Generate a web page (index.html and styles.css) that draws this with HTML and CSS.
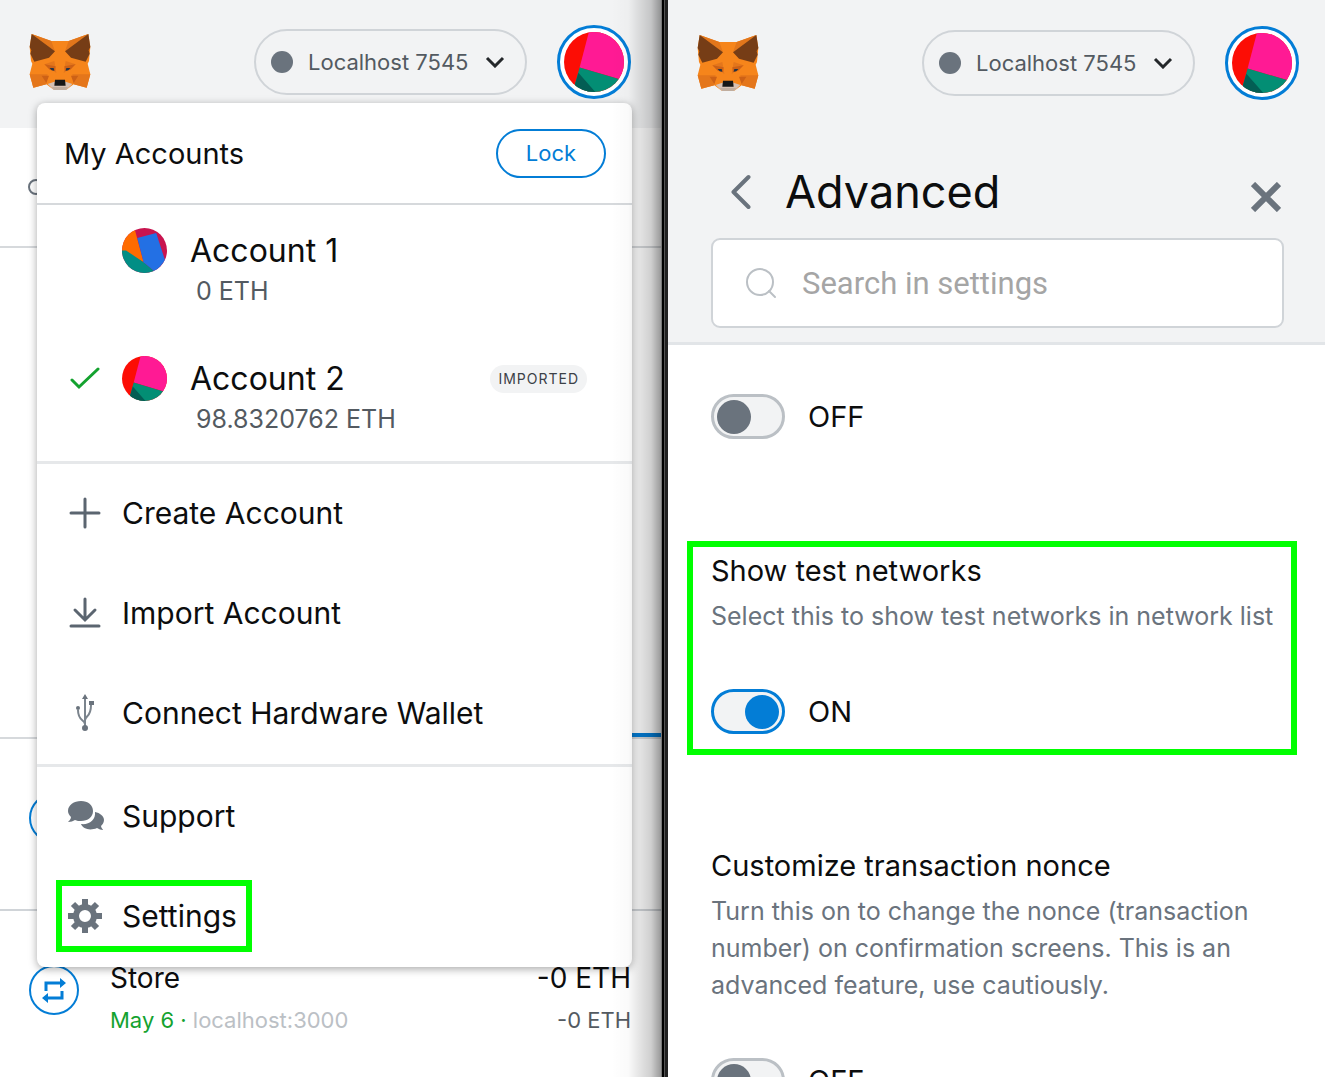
FILE: index.html
```html
<!DOCTYPE html>
<html lang="en">
<head>
<meta charset="utf-8">
<title>Wallet</title>
<link rel="stylesheet" href="styles.css">
</head>
<body>
<svg class="defs" aria-hidden="true">
  <symbol id="fox" viewBox="0 0 186 174">
    <path fill="#f6851b" d="M8 3 67 24H119L178 3 184 42 180 84 176 92 184 124 173 164 134 154 112 170H74L52 154 13 164 2 124 10 92 6 84 2 42Z"/>
    <path fill="#e2761b" d="M8 3 67 24 78 55ZM178 3 119 24 108 55Z"/>
    <path fill="#763d16" d="M8 3 78 55 60 74 16 86 4 62 7 52 2 42ZM178 3 108 55 126 74 170 86 182 62 179 52 184 42Z"/>
    <path fill="#e4761b" d="M2 124H56L52 154 13 164ZM184 124H130L134 154 173 164Z"/>
    <path fill="#e4761b" d="M76 84 82 120 46 94ZM110 84 104 120 140 94Z"/>
    <path fill="#cd6116" d="M46 94 80 100 78 114 62 110ZM140 94 106 100 108 114 124 110ZM38 128H60L52 150ZM148 128H126L134 150Z"/>
    <path fill="#233447" d="M62 105 74 105 76 113 68 112ZM124 105 112 105 110 113 118 112Z"/>
    <path fill="#d7c1b3" d="M56 153 76 146H110L130 153 112 170H74Z"/>
    <path fill="#c0ad9e" d="M68 162H118L110 171H76Z"/>
    <path fill="#161616" d="M78 140H108L110 158H76Z"/>
  </symbol>
  <symbol id="avatar-pink" viewBox="0 0 100 100">
    <clipPath id="disc"><circle cx="50" cy="50" r="50"/></clipPath>
    <g clip-path="url(#disc)">
      <path fill="#fc0d05" d="M0 0H100V100H0Z"/>
      <path fill="#ff1a94" d="M42-2 26 59 100 81V-2Z"/>
      <path fill="#038e74" d="M26 59 100 81V102H14Z"/>
      <path fill="#035e54" d="M24 68 54 102H14Z"/>
    </g>
  </symbol>
  <symbol id="avatar-blue" viewBox="0 0 100 100">
    <clipPath id="disc-blue"><circle cx="50" cy="50" r="50"/></clipPath>
    <g clip-path="url(#disc-blue)">
      <path fill="#c8144f" d="M0 0H100V100H0Z"/>
      <path fill="#ff6b00" d="M27-2 48 76 0 50V-2Z"/>
      <path fill="#018e85" d="M0 50H9L48 76 74 98V102H0Z"/>
      <path fill="#2370e4" d="M34 22 76 11 96 73 74 98 48 76Z"/>
    </g>
  </symbol>
  <symbol id="chevron" viewBox="0 0 20 12">
    <path d="M2 2 10 10 18 2" fill="none" stroke="#24272a" stroke-width="3"/>
  </symbol>
  <symbol id="swap" viewBox="0 0 50 50">
    <circle cx="25" cy="25" r="24" fill="#fff" stroke="#037dd6" stroke-width="2"/>
    <path d="M17 26V18H33M33 26V33H17" fill="none" stroke="#037dd6" stroke-width="3"/>
    <path d="M31 13 37 18 31 23ZM19 28 13 33 19 38Z" fill="#037dd6"/>
  </symbol>
</svg>

<main class="screens">
  <section class="panel home">
    <header class="bar">
      <svg class="fox"><use href="#fox"/></svg>
      <button class="network"><span class="dot"></span>Localhost 7545<svg class="chev"><use href="#chevron"/></svg></button>
      <button class="avatar-btn" aria-label="Accounts"><svg><use href="#avatar-pink"/></svg></button>
    </header>
    <div class="status"><span class="ring"></span></div>
    <div class="overview"></div>
    <ul class="activity">
      <li class="tx"><svg class="tx-icon"><use href="#swap"/></svg></li>
      <li class="tx">
        <svg class="tx-icon"><use href="#swap"/></svg>
        <div class="tx-text">
          <div class="tx-line"><span>Store</span><span>-0 ETH</span></div>
          <div class="tx-line tx-sub"><span><span class="date">May 6 ·</span> localhost:3000</span><span class="fiat">-0 ETH</span></div>
        </div>
      </li>
    </ul>

    <nav class="menu">
      <div class="menu-head"><h2>My Accounts</h2><button class="lock">Lock</button></div>
      <div class="group accounts">
        <button class="account">
          <span class="check"></span>
          <svg class="acc-avatar"><use href="#avatar-blue"/></svg>
          <span class="acc-text"><span class="acc-name">Account 1</span><span class="acc-bal">0 ETH</span></span>
        </button>
        <button class="account">
          <span class="check"><svg viewBox="0 0 30 24"><path d="M2 13 9 20 28 2" fill="none" stroke="#14a22f" stroke-width="3" stroke-linecap="round"/></svg></span>
          <svg class="acc-avatar"><use href="#avatar-pink"/></svg>
          <span class="acc-text"><span class="acc-name">Account 2</span><span class="acc-bal">98.8320762 ETH</span></span>
          <span class="tag">IMPORTED</span>
        </button>
      </div>
      <div class="group">
        <button class="item"><svg viewBox="0 0 36 40"><path d="M17 6V34M3 20H31" stroke="#5b6570" stroke-width="3" stroke-linecap="round"/></svg>Create Account</button>
        <button class="item"><svg viewBox="0 0 36 40"><path d="M17 6V26M7 17 17 27 27 17M3 33H31" fill="none" stroke="#5b6570" stroke-width="3" stroke-linecap="round"/></svg>Import Account</button>
        <button class="item"><svg viewBox="0 0 36 40"><g fill="none" stroke="#7b848d" stroke-width="2"><path d="M17 5V36M17 31C16 26 10 28 10 17M17 27C18 22 23 24 23 12"/></g><path fill="#6a737d" d="M17 1 20 6H14ZM21 8H26V12H21ZM17 32A3 3 0 1 1 17 38 3 3 0 1 1 17 32Z"/><circle cx="10" cy="15" r="2" fill="#6a737d"/></svg>Connect Hardware Wallet</button>
      </div>
      <div class="group">
        <button class="item"><svg viewBox="0 0 36 40"><path fill="#6a737d" d="M27 16C32 17 36 20 36 24 36 27 34 29 33 30 33 32 35 33 35 34 33 34 31 33 29 32 22 35 15 33 13 28 21 29 28 24 27 16Z"/><path fill="#6a737d" d="M13 5C20 5 25 9 25 15S20 25 13 25C11 25 9 25 7 24 5 25 3 26 0 26 1 25 3 23 3 21 1 19 0 17 0 15 0 9 6 5 13 5Z"/></svg>Support</button>
        <button class="item marked"><svg viewBox="0 0 36 40"><circle cx="17" cy="20" r="9" fill="none" stroke="#6a737d" stroke-width="6"/><g stroke="#6a737d" stroke-width="6"><path d="M17 3V9M17 31V37M0 20H6M28 20H34M5 8 9 12M25 28 29 32M29 8 25 12M9 28 5 32"/></g></svg>Settings</button>
      </div>
    </nav>
  </section>

  <section class="panel settings">
    <div class="settings-top">
      <header class="bar">
        <svg class="fox"><use href="#fox"/></svg>
        <button class="network"><span class="dot"></span>Localhost 7545<svg class="chev"><use href="#chevron"/></svg></button>
        <button class="avatar-btn" aria-label="Accounts"><svg><use href="#avatar-pink"/></svg></button>
      </header>
      <div class="title">
        <button class="back" aria-label="Back"><svg viewBox="0 0 20 36"><path d="M18 3 3 18 18 33" fill="none" stroke="#6a737d" stroke-width="4" stroke-linecap="round" stroke-linejoin="round"/></svg></button>
        <h1>Advanced</h1>
        <button class="close" aria-label="Close"><svg viewBox="0 0 30 30"><path d="M2 2 28 28M28 2 2 28" stroke="#6a737d" stroke-width="6"/></svg></button>
      </div>
      <label class="search">
        <svg viewBox="0 0 32 32"><circle cx="15" cy="15" r="13" fill="none" stroke="#bbc0c5" stroke-width="2"/><path d="M24 24 30 30" stroke="#bbc0c5" stroke-width="2" stroke-linecap="round"/></svg>
        <input type="text" placeholder="Search in settings" aria-label="Search in settings">
      </label>
    </div>
    <div class="options">
      <section class="option">
        <label class="toggle"><input type="checkbox">OFF</label>
      </section>
      <section class="option marked-option">
        <h3>Show test networks</h3>
        <p>Select this to show test networks in network list</p>
        <label class="toggle"><input type="checkbox" checked>ON</label>
      </section>
      <section class="option">
        <h3>Customize transaction nonce</h3>
        <p>Turn this on to change the nonce (transaction number) on confirmation screens. This is an advanced feature, use cautiously.</p>
        <label class="toggle"><input type="checkbox">OFF</label>
      </section>
    </div>
  </section>
</main>
</body>
</html>
```

FILE: styles.css
```css
*, *::before, *::after { box-sizing: border-box; }
body { margin: 0; background: #fff; color: #0c0d0e; font-family: Inter, "Liberation Sans", sans-serif; font-size: 28px; }
h1, h2, h3, p, ul { margin: 0; padding: 0; font-weight: 400; }
button { margin: 0; padding: 0; border: 0; background: none; font: inherit; color: inherit; text-align: left; }
svg { display: block; flex: none; }
.defs { position: absolute; width: 0; height: 0; }

.screens { display: grid; grid-template-columns: 668fr 657fr; height: 100vh; overflow: hidden; }
.panel { position: relative; min-width: 0; overflow: hidden; }

.bar { display: flex; align-items: center; gap: 30px; height: 128px; padding: 0 26px 4px 29px; background: #f2f3f4; }
.fox { width: 62px; height: 58px; margin-right: auto; }
.network { display: flex; align-items: center; width: 273px; height: 66px; padding: 0 20px 0 15px; border: 2px solid #d0d4d8; border-radius: 33px; color: #535a61; font-size: 22px; white-space: nowrap; }
.dot { width: 22px; height: 22px; margin-right: 15px; border-radius: 50%; background: #6a737d; }
.chev { width: 20px; height: 12px; margin-left: auto; }
.avatar-btn { display: grid; place-items: center; width: 74px; height: 74px; border: 3px solid #037dd6; border-radius: 50%; background: #fff; }
.avatar-btn svg { width: 60px; height: 60px; }

.home { padding-right: 7px; background: linear-gradient(90deg, #777 1px, #000 1px 3px, #555 3px 4px, #222 4px) right / 7px 100% no-repeat; }
.home::after { content: ""; position: absolute; top: 0; right: 7px; bottom: 0; width: 50px; background: linear-gradient(90deg, transparent, rgba(0, 0, 0, .02) 35%, rgba(0, 0, 0, .08) 50%, rgba(0, 0, 0, .19) 80%, rgba(0, 0, 0, .4)); pointer-events: none; }
.home .bar { padding-right: 30px; }
.status { display: flex; align-items: center; height: 120px; padding-left: 28px; border-bottom: 2px solid #d6d9dc; }
.ring { width: 16px; height: 16px; border: 2px solid #6a737d; border-radius: 50%; }
.overview { height: 491px; border-bottom: 2px solid #d6d9dc; background: linear-gradient(#037dd6, #037dd6) right bottom / 50% 4px no-repeat; }
.activity { list-style: none; }
.tx { display: flex; gap: 31px; height: 172px; padding: 54px 30px 0 29px; border-bottom: 2px solid #d0d4d8; }
.tx-icon { width: 50px; height: 50px; }
.tx-text { flex: 1; }
.tx-line { display: flex; justify-content: space-between; line-height: 26px; }
.tx-sub { margin-top: 16px; color: #bbc0c5; font-size: 22px; }
.date { color: #14a22f; }
.fiat { color: #535a61; }

.menu { position: absolute; top: 103px; left: 37px; right: 36px; border-radius: 8px; background: #fff; box-shadow: 0 2px 8px rgba(0, 0, 0, .35); }
.menu-head { display: flex; align-items: center; justify-content: space-between; height: 100px; padding: 0 26px 0 27px; }
.menu-head h2 { font-size: 29px; }
.lock { width: 110px; height: 49px; border: 2px solid #037dd6; border-radius: 25px; color: #037dd6; font-size: 22px; text-align: center; }
.group { border-top: 3px solid #e6e8ea; }
.accounts { border-top: 2px solid #d6d9dc; }
.account { display: flex; width: 100%; height: 128px; padding: 23px 45px 0 32px; }
.check { width: 53px; padding-top: 11px; }
.check svg { width: 32px; height: 24px; }
.acc-avatar { width: 45px; height: 45px; margin-right: 23px; }
.acc-text { display: flex; flex-direction: column; margin-right: auto; }
.acc-name { font-size: 32px; line-height: 45px; }
.acc-bal { padding-left: 6px; color: #535a61; font-size: 25px; line-height: 36px; }
.tag { height: 28px; margin-top: 9px; padding: 0 8px; border-radius: 14px; background: #f2f3f4; color: #3c4147; font-size: 14px; line-height: 28px; letter-spacing: 1px; }
.item { position: relative; display: flex; align-items: center; gap: 18px; width: 100%; height: 100px; padding: 0 0 3px 31px; font-size: 30px; }
.item svg { width: 36px; height: 40px; }
.marked::after { content: ""; position: absolute; top: 13px; left: 19px; width: 196px; height: 72px; border: 6px solid #0f0; }

.settings-top { height: 345px; padding-top: 1px; border-bottom: 3px solid #e2e5e8; background: #f2f3f4; }
.title { display: flex; align-items: center; height: 109px; padding: 16px 44px 0 62px; }
.back svg { width: 21px; height: 36px; }
.title h1 { margin: 0 auto 0 34px; font-size: 45px; }
.close { margin-top: 10px; }
.close svg { width: 30px; height: 30px; }
.search { display: flex; align-items: center; gap: 25px; height: 90px; margin: 0 41px 0 43px; padding: 0 32px; border: 2px solid #d0d4d8; border-radius: 9px; background: #fff; }
.search svg { width: 32px; height: 32px; }
.search input { flex: 1; min-width: 0; padding: 0; border: 0; outline: 0; background: none; font-family: Roboto, sans-serif; font-size: 31px; }
.search input::placeholder { color: #a5a5a5; opacity: 1; }

.options { display: flex; flex-direction: column; gap: 113px; padding: 49px 41px 0 43px; }
.option { position: relative; }
.option h3 { font-size: 29px; line-height: 37px; }
.option p { margin: 9px 0 54px; color: #6a737d; font-size: 25px; line-height: 37px; }
.toggle { display: flex; align-items: center; gap: 23px; font-size: 29px; line-height: 45px; }
.toggle input { appearance: none; display: flex; align-items: center; width: 74px; height: 45px; margin: 0; padding: 0 3px; border: 3px solid #bbc0c5; border-radius: 23px; background: #f2f3f4; }
.toggle input::before { content: ""; width: 34px; height: 34px; border-radius: 50%; background: #6a737d; }
.toggle input:checked { justify-content: flex-end; border-color: #037dd6; }
.toggle input:checked::before { background: #037dd6; }
.marked-option::after { content: ""; position: absolute; inset: -11px -13px -21px -24px; border: 6px solid #0f0; pointer-events: none; }
```
